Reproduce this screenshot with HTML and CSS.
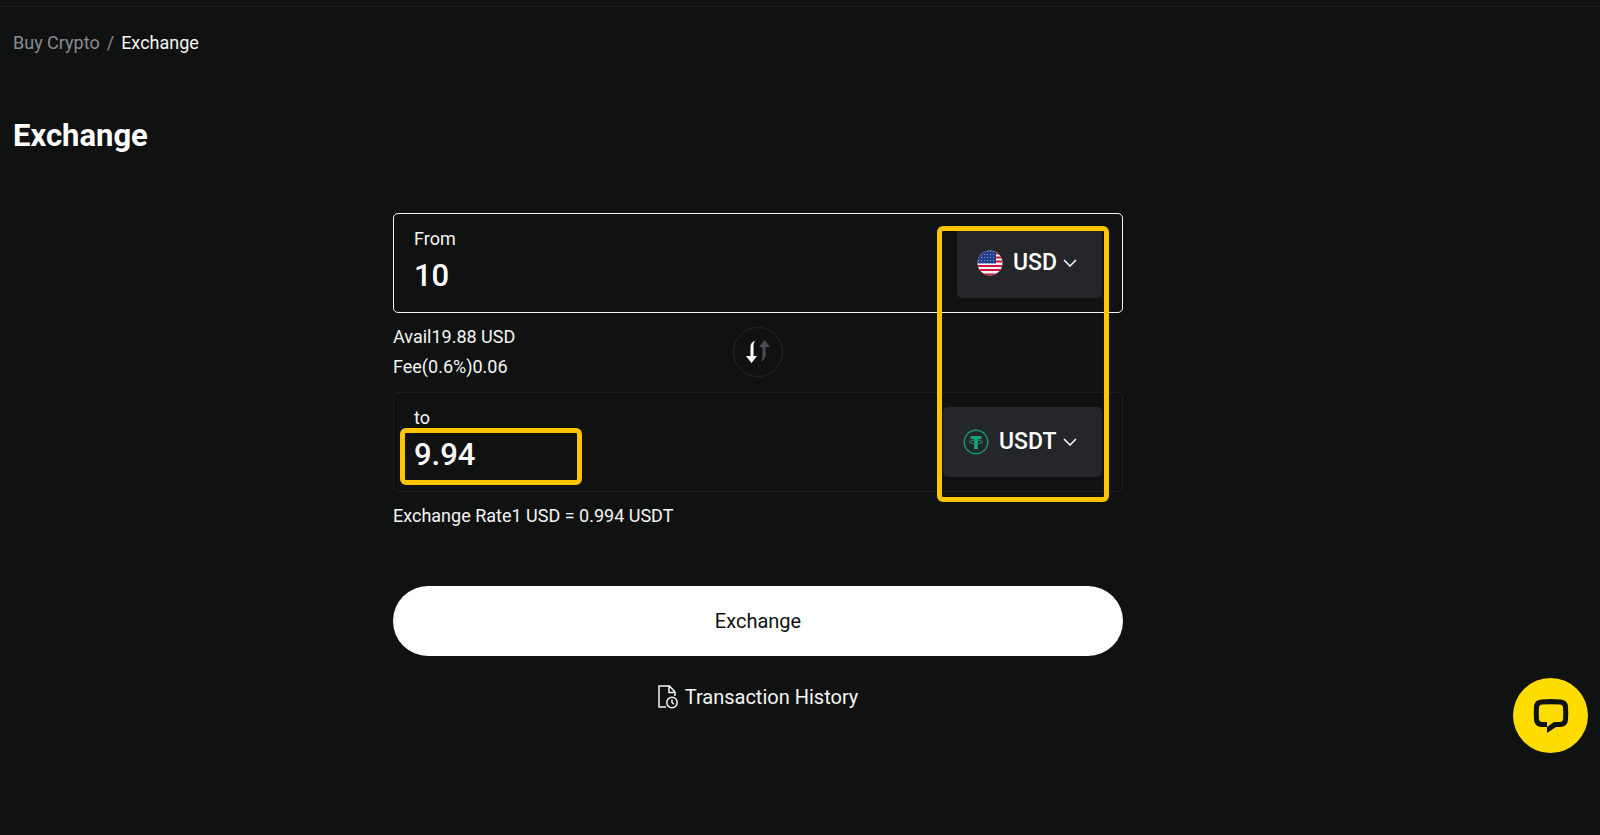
FILE: index.html
```html
<!DOCTYPE html>
<html lang="en">
<head>
<meta charset="utf-8">
<title>Exchange</title>
<link rel="stylesheet" href="styles.css">
</head>
<body>
<header class="topbar"></header>
<main class="page">
  <nav class="crumbs" aria-label="Breadcrumb">
    <a class="crumb-link" href="#">Buy Crypto</a>
    <span class="crumb-sep">/</span>
    <span class="crumb-current">Exchange</span>
  </nav>
  <h1 class="title">Exchange</h1>

  <form class="form">
    <div class="currencies">
      <div class="field field-active">
        <div class="amount">
          <label class="amount-label" for="from">From</label>
          <input class="amount-input" id="from" type="text" value="10">
        </div>
        <label class="currency">
          <svg class="coin" viewBox="0 0 26 26" aria-hidden="true">
            <defs>
              <clipPath id="round"><circle cx="13" cy="13" r="12.5"/></clipPath>
              <pattern id="stars" width="3" height="3" patternUnits="userSpaceOnUse"><rect width="3" height="3" fill="#24408a"/><circle cx="1.5" cy="1.5" r=".6" fill="#8fa0cc"/></pattern>
            </defs>
            <g clip-path="url(#round)">
              <rect width="26" height="26" fill="#f6f3f5"/>
              <path d="M0 3.5h26M0 7.5h26M0 11.500h26M0 16h26M0 20h26M0 24.500h26" stroke="#c8183c" stroke-width="2"/>
              <rect width="19" height="13.500" fill="url(#stars)"/>
            </g>
          </svg>
          <select class="currency-select" aria-label="From currency"><option>USD</option></select>
          <svg class="chevron" viewBox="0 0 14 8" aria-hidden="true"><path d="M1 1l6 6 6-6"/></svg>
        </label>
      </div>

      <div class="middle">
        <div class="details">
          <p class="line">Avail19.88 USD</p>
          <p class="line">Fee(0.6%)0.06</p>
        </div>
        <button class="swap" type="button" aria-label="Swap currencies">
          <svg class="swap-icon" viewBox="0 0 24 24" aria-hidden="true">
            <path fill="#fff" d="M9.500.8C6.500 1.500 4.500 3.500 4.500 6.500V16H0l5.500 7L11 16H7.500V5.500c0-2 .5-3.300 2-4.700z"/>
            <path fill="#4b4a56" d="M14.500 21.500c3-1 5-3 5-6V7H24L18.500 0 13 7h3.500v9.500c0 2-.5 3.500-2 5z"/>
          </svg>
        </button>
      </div>

      <div class="field">
        <div class="amount">
          <label class="amount-label" for="to">to</label>
          <input class="amount-input" id="to" type="text" value="9.94">
          <span class="mark mark-amount"></span>
        </div>
        <label class="currency">
          <svg class="coin" viewBox="0 0 26 26" aria-hidden="true">
            <circle cx="13" cy="13" r="11.800" fill="none" stroke="#12996f" stroke-width="1.400"/>
            <path fill="#12a67a" d="M7.500 7h11v3.300h-3.700V20h-3.600v-9.700H7.500z"/>
            <ellipse cx="13" cy="13" rx="6.700" ry="1.700" fill="none" stroke="#12996f"/>
          </svg>
          <select class="currency-select" aria-label="To currency"><option>USDT</option></select>
          <svg class="chevron" viewBox="0 0 14 8" aria-hidden="true"><path d="M1 1l6 6 6-6"/></svg>
        </label>
      </div>
      <span class="mark mark-currencies"></span>
    </div>

    <p class="line rate">Exchange Rate1 USD = 0.994 USDT</p>
    <button class="submit" type="submit">Exchange</button>
    <a class="history" href="#">
      <svg class="history-icon" viewBox="0 0 20 24" aria-hidden="true">
        <path d="M8 22H1V1h10.500l5.500 6v4M11 1v6.500h6"/>
        <circle cx="14" cy="17.500" r="5.200"/>
        <path d="M14 14.500v3l1.800 1.800"/>
      </svg>
      Transaction History
    </a>
  </form>
</main>
<button class="chat" type="button" aria-label="Open chat">
  <svg class="chat-icon" viewBox="0 0 36 36" aria-hidden="true">
    <path fill="#101211" fill-rule="evenodd" d="M8 1.500Q18 .5 28 1.500Q34.500 2 35 8.500Q35.500 15 35 22Q34.500 28 28 29H23L14 35V29H8Q1.500 28 1 22Q.5 15 1 8.500Q1.500 2 8 1.500zM9 6.500Q6.200 6.800 6 9.500Q5.500 15 6 21.500Q6.500 24 9 24H14V29L21 24H27Q29.500 24 30 21.500Q30.500 15 30 9.500Q29.800 6.800 27 6.500Q18 5.800 9 6.500z"/>
  </svg>
</button>
</body>
</html>
```
FILE: styles.css
```css
* { box-sizing: border-box; }

body {
  margin: 0;
  min-height: 100vh;
  background: #101211;
  color: #f5f5f5;
  font-family: Roboto, "Open Sans", sans-serif;
  font-size: 18px;
  line-height: 30px;
}

h1, p { margin: 0; }
a { color: inherit; text-decoration: none; }

button, input, select {
  border: 0;
  margin: 0;
  padding: 0;
  background: none;
  color: inherit;
  font: inherit;
}

button { cursor: pointer; }
svg { display: block; fill: none; }

.topbar {
  height: 7px;
  border-bottom: 1px solid #1c1d20;
}

.page {
  margin-right: 97px;
  padding: 21px 0 0 13px;
}

.crumbs { display: flex; gap: 7px; }
.crumb-link, .crumb-sep { color: #8a8a95; }

.title {
  margin-top: 58px;
  color: #fff;
  font-size: 31px;
  font-weight: 700;
  line-height: 40px;
}

.form {
  display: flex;
  flex-direction: column;
  max-width: 730px;
  margin: 57px auto 0;
}

.currencies { position: relative; }

.field {
  display: flex;
  align-items: center;
  justify-content: space-between;
  height: 100px;
  padding: 0 20px;
  border: 1px solid #1e2023;
  border-radius: 5px;
}

.field-active { border-color: #f5f5f5; }

.amount {
  position: relative;
  display: flex;
  flex: 1;
  flex-direction: column;
}

.amount-label { line-height: 24px; }

.amount-input {
  width: 160px;
  height: 48px;
  color: #fff;
  font-size: 31px;
  font-weight: 500;
  outline: 0;
}

.currency {
  display: flex;
  align-items: center;
  height: 70px;
  padding: 0 25px 0 20px;
  border-radius: 5px;
  background: #25262a;
}

.coin { width: 26px; height: 26px; margin-right: 10px; }

.currency-select {
  appearance: none;
  color: #fff;
  font-size: 23px;
  font-weight: 500;
  outline: 0;
}

.chevron {
  width: 14px;
  height: 8px;
  margin-left: 6px;
  stroke: #fff;
  stroke-width: 1.5;
}

.middle {
  display: grid;
  grid-template-columns: 1fr auto 1fr;
  align-items: center;
  padding: 9px 0 10px;
}

.swap {
  display: grid;
  place-items: center;
  width: 50px;
  height: 50px;
  border: 1px solid #242628;
  border-radius: 50%;
}

.swap-icon { width: 24px; height: 24px; }

.rate { margin-top: 9px; }

.submit {
  height: 70px;
  margin-top: 55px;
  border-radius: 35px;
  background: #fff;
  color: #101211;
  font-size: 20px;
}

.history {
  display: flex;
  align-items: center;
  align-self: center;
  gap: 7px;
  margin-top: 26px;
  font-size: 20px;
}

.history-icon {
  width: 20px;
  height: 24px;
  stroke: #f5f5f5;
  stroke-width: 1.5;
}

.mark {
  position: absolute;
  border: 5px solid #ffc400;
  border-radius: 6px;
  pointer-events: none;
}

.mark-amount {
  top: 22px;
  left: -14px;
  width: 182px;
  height: 57px;
}

.mark-currencies {
  top: 13px;
  right: 14px;
  bottom: -10px;
  width: 172px;
}

.chat {
  position: fixed;
  right: 12px;
  bottom: 82px;
  display: grid;
  place-items: center;
  width: 75px;
  height: 75px;
  border-radius: 50%;
  background: #ffdc00;
}

.chat-icon { width: 36px; height: 36px; }
```
